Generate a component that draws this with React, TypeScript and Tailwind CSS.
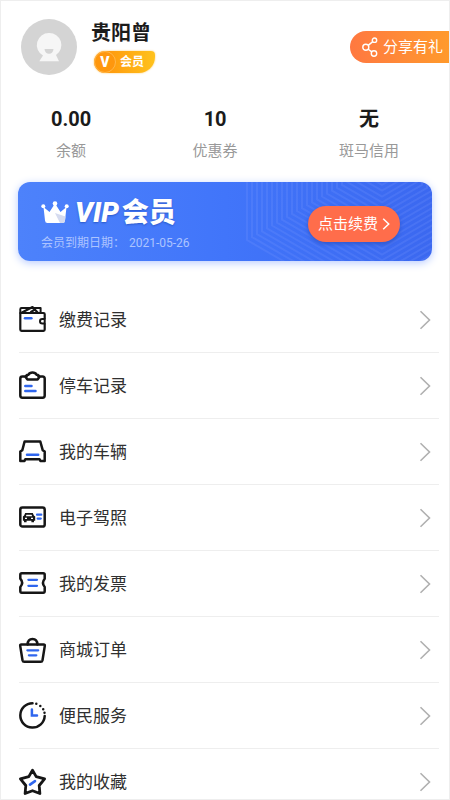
import React from "react";

const INK = "#161616";
const BLUE = "#2f66ee";

function Icon({ children }: { children: React.ReactNode }) {
  return (
    <svg
      viewBox="0 0 27 27"
      className="size-[27px] shrink-0 overflow-visible"
      fill="none"
      stroke={INK}
      strokeWidth="2.5"
      strokeLinecap="round"
      strokeLinejoin="round"
      aria-hidden="true"
    >
      {children}
    </svg>
  );
}

const WalletIcon = () => (
  <Icon>
    <path d="M1.3 7V3.2Q1.3 2 2.5 2H21.6V7" strokeWidth="2" />
    <path d="M3 6.4 13.5 1 18.6 6.4M12 6l4-2.6" strokeWidth="2.2" />
    <path d="M25.7 12.4V8.2Q25.7 7 24.5 7H1.3V23.6Q1.3 24.8 2.5 24.8H24.5Q25.7 24.8 25.7 23.6V18" strokeWidth="2.2" />
    <path d="M25.7 13h-2.4a2.3 2.3 0 0 0 0 4.6h2.4z" strokeWidth="2" />
    <path d="M6 12.3h6.4" stroke={BLUE} />
  </Icon>
);

const ClipboardIcon = () => (
  <Icon>
    <path d="M7.4 4.6H3.4Q1.3 4.6 1.3 6.7V23.6Q1.3 25.7 3.4 25.7H23.6Q25.7 25.7 25.7 23.6V6.7Q25.7 4.6 23.6 4.6H19.6" />
    <path d="M6.8 5.3Q7 3 9.3 2.8 10.6 .6 13.5 .6T17.7 2.8Q20 3 20.2 5.3L18.600 7.400H8.400Z" />
    <path d="M6.3 14.100h6.200M6.300 19h10.200" stroke={BLUE} />
  </Icon>
);

const CarIcon = () => (
  <Icon>
    <path d="M5.600 3.500H21.300L23.700 12.200 25.700 13.600V22.900H21.400L20.600 21.300H6.300L5.500 22.900H1.300V13.600L3.300 12.200Z" />
    <path d="M8 16.700h11.200" stroke={BLUE} />
  </Icon>
);

const LicenseIcon = () => (
  <Icon>
    <rect x="1.300" y="3.600" width="24.400" height="19" rx="2.200" />
    <path
      d="M6.200 9H13.800L14.900 11.600 16.200 12.400V16.800H15V18.200H12.400V16.800H7.600V18.200H5V16.800H3.900V12.400L5.100 11.600Z"
      fill={INK}
      stroke="none"
    />
    <path d="M7.400 10.700H12.600L13.100 12.200H6.900ZM6 13.700H8V15H6ZM12 13.700H14V15H12Z" fill="white" stroke="none" />
    <path d="M18 10.700h4.300M18.600 14.600h3.200" stroke={BLUE} strokeWidth="2.200" />
  </Icon>
);

const TicketIcon = () => (
  <Icon>
    <path d="M2.800 3.200H24.200Q25.700 3.200 25.700 4.700V8.700Q22.200 12.800 25.700 17V21Q25.700 22.800 24.200 22.800H2.800Q1.300 22.800 1.300 21V17Q5 12.800 1.300 8.700V4.700Q1.300 3.200 2.800 3.200Z" />
    <path d="M9.400 9.800h8.600M9.400 15.800h8.600" stroke={BLUE} strokeWidth="2.300" />
  </Icon>
);

const BasketIcon = () => (
  <Icon>
    <path d="M2.300 8.600H24.700Q26 8.600 25.800 9.900L23.500 24.200Q23.200 25.700 21.700 25.700H5.300Q3.800 25.700 3.500 24.200L1.200 9.900Q1 8.600 2.300 8.600Z" />
    <path d="M8.600 8.400Q8.800 2.900 13.500 2.900T18.400 8.400" />
    <path d="M8.400 14.300h10.800M9.900 19.300h7.400" stroke={BLUE} strokeWidth="2.300" />
  </Icon>
);

const ClockIcon = () => (
  <Icon>
    <path d="M13.500 1.200A12.200 12.200 0 1 0 25.700 14" />
    <path d="M17.300 1.700v.1M21.300 4v.1M24.200 7.200v.1M25.500 10.700v.1" />
    <path d="M12.900 7.600V13.400H18" stroke={BLUE} strokeLinejoin="miter" />
  </Icon>
);

const StarIcon = () => (
  <Icon>
    <path
      d="M13.500 2.300 17.200 8.600 25.600 10.800 20.200 17.500 20.900 25.500 13.500 22.700 6.100 25.500 6.800 17.500 1.400 10.800 9.800 8.600Z"
      strokeWidth="2.800"
    />
    <path d="M11 16.600 16 13.100" stroke={BLUE} strokeWidth="2.600" />
  </Icon>
);

const menu = [
  { label: "缴费记录", icon: WalletIcon },
  { label: "停车记录", icon: ClipboardIcon },
  { label: "我的车辆", icon: CarIcon },
  { label: "电子驾照", icon: LicenseIcon },
  { label: "我的发票", icon: TicketIcon },
  { label: "商城订单", icon: BasketIcon },
  { label: "便民服务", icon: ClockIcon },
  { label: "我的收藏", icon: StarIcon },
];

const stats = [
  { value: "0.00", label: "余额" },
  { value: "10", label: "优惠券" },
  { value: "无", label: "斑马信用" },
];

function HexPattern() {
  const lines = Array.from({ length: 27 }, (_, k) => {
    const x = 1 + k * 5;
    const y = 58 - k * 2.9;
    const tip = y + (136 - x) * 0.58;
    return `M${x} -80V${y}L136 ${tip}L${272 - x} ${y}V-80`;
  });
  return (
    <svg
      viewBox="0 0 186 79"
      className="absolute top-0 right-0 h-full w-[186px]"
      fill="none"
      stroke="#7f9cff"
      strokeOpacity="0.2"
      strokeWidth="2"
      aria-hidden="true"
    >
      <path d={lines.join("")} />
    </svg>
  );
}

export default function App() {
  return (
    <div className="flex h-screen flex-col border border-[#eeeeee] bg-white font-[Roboto,'Noto_Sans_CJK_SC',sans-serif] text-[#1b1b1b]">
      <main className="flex-1 overflow-y-auto [scrollbar-width:none]">
        <header className="flex items-start pt-[18px] pl-5">
          <svg viewBox="0 0 56 56" className="size-14 shrink-0" role="img" aria-label="头像">
            <circle cx="28" cy="28" r="28" fill="#d4d4d4" />
            <path d="M28 14a12 12 0 0 1 7 22L38 42.300H18.300L22 36.500A12 12 0 0 1 28 14Z" fill="#f6f6f6" />
            <path d="M23.500 30H32.500Q32 34.800 28 34.800T23.500 30Z" fill="#d4d4d4" />
          </svg>
          <div className="ml-[14px]">
            <h1 className="text-xl leading-7 font-bold">贵阳曾</h1>
            <div className="mt-1 ml-[3px] flex h-[22px] w-[61px] items-center rounded-tl-[11px] rounded-tr-[4px] rounded-br-[16px] rounded-bl-[11px] bg-linear-to-r from-[#ff8d08] to-[#ffc21c] text-white shadow-[0_0_2px_#ffc65c]">
              <span className="flex size-[22px] items-center justify-center rounded-full border border-[#ffb84a] bg-[#ff970d] text-sm leading-none font-black">
                V
              </span>
              <span className="ml-1 text-xs leading-5 font-bold">会员</span>
            </div>
          </div>
          <button className="-mr-px ml-auto mt-3 flex h-8 w-[100px] items-center rounded-l-full bg-linear-to-r from-[#ff7840] to-[#ff9a2b] pl-3 text-[15px] text-white">
            <svg viewBox="0 0 16 20" className="mr-[5px] h-5 w-4 shrink-0" fill="none" stroke="white" strokeWidth="1.400" aria-hidden="true">
              <circle cx="12.500" cy="3.200" r="2.200" />
              <circle cx="3.800" cy="10.300" r="3" />
              <circle cx="12" cy="16.500" r="2.700" />
              <path d="M6.200 8.400 10.800 4.600M6.200 12.200 9.800 14.900" />
            </svg>
            <span className="whitespace-nowrap">分享有礼</span>
          </button>
        </header>

        <section className="mt-[32px] flex justify-between px-[50px] text-center">
          {stats.map((s) => (
            <div key={s.label}>
              <p className="text-xl leading-6 font-bold">{s.value}</p>
              <p className="mt-2 text-[15px] leading-6 text-[#999999]">{s.label}</p>
            </div>
          ))}
        </section>

        <section className="relative mx-[17px] mt-[19px] flex h-[79px] items-center justify-between overflow-hidden rounded-xl bg-linear-to-r from-[#4d82fb] via-[#4175fa] to-[#3b68f0] pr-8 pl-[23px] shadow-[0_2px_9px_#b9ccff]">
          <HexPattern />
          <div className="relative pt-[6px]">
            <h2 className="flex items-center text-[28px] leading-8 font-black text-white [text-shadow:0_1px_2px_#2958c9]">
              <svg viewBox="0 0 28 24" className="mr-[6px] h-6 w-7" aria-hidden="true">
                <path d="M2.500 6 8.500 11 14 2.500 19.500 11 25.500 6 24 19.500Q23.800 22 21.500 22H6.500Q4.200 22 4 19.500Z" fill="white" />
                <path d="M14 12 24.500 15.500 24 19.500Q23.800 22 21.500 22H19Z" fill="#d5dbef" />
                <circle cx="2.300" cy="5.300" r="2" fill="white" />
                <circle cx="14" cy="2.600" r="2.300" fill="white" />
                <circle cx="25.700" cy="5.300" r="2" fill="white" />
              </svg>
              <span className="italic">VIP</span>
              <span className="ml-[3px] text-[27px]">会员</span>
            </h2>
            <p className="mt-1 flex gap-1 text-xs leading-5 text-[#adc4ff]">
              <span>会员到期日期：</span>
              <time dateTime="2021-05-26">2021-05-26</time>
            </p>
          </div>
          <button className="relative mt-1 flex h-9 w-[92px] items-center justify-center gap-1 rounded-full bg-[#ff6d4b] text-[15px] whitespace-nowrap text-white shadow-[0_2px_4px_#2f57cc]">
            <span className="pt-[2px]">点击续费</span>
            <svg viewBox="0 0 8 12" className="h-3 w-2 shrink-0" fill="none" stroke="white" strokeWidth="1.500" aria-hidden="true">
              <path d="M1.200 .8 6.700 6 1.200 11.200" />
            </svg>
          </button>
        </section>

        <nav className="mt-[26px] mr-[10px] ml-[18px]">
          {menu.map(({ label, icon: RowIcon }) => (
            <a key={label} href="#" className="flex h-[66px] items-center border-b border-[#eeeeee] pr-2">
              <RowIcon />
              <span className="ml-[13px] text-[17px] leading-6 text-[#303030]">{label}</span>
              <svg viewBox="0 0 12 20" className="ml-auto h-5 w-3" fill="none" stroke="#b0b0b0" strokeWidth="1.600" aria-hidden="true">
                <path d="M1.500 1.200 10.500 10 1.500 18.800" />
              </svg>
            </a>
          ))}
        </nav>
      </main>
    </div>
  );
}
